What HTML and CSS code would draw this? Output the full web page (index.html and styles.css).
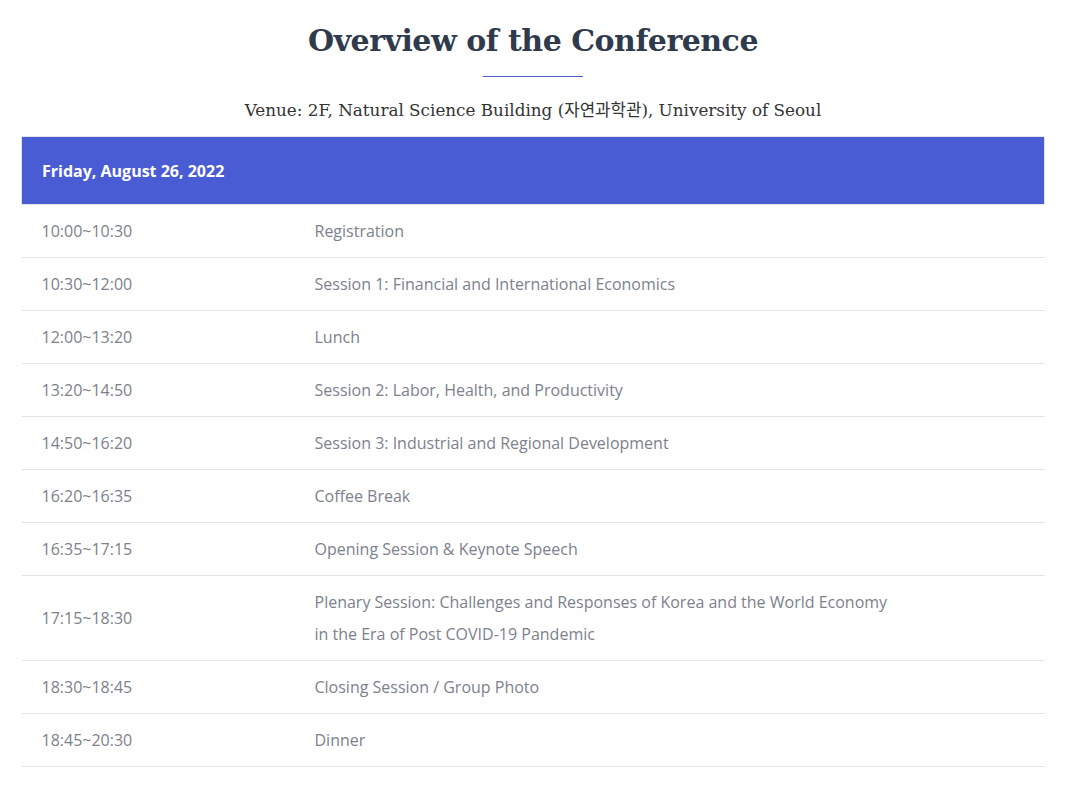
FILE: index.html
```html
<!DOCTYPE html>
<html lang="en">
<head>
<meta charset="utf-8">
<title>Overview of the Conference</title>
<link rel="stylesheet" href="styles.css">
</head>
<body>
<main class="wrap">
  <h1 class="title">Overview of the Conference</h1>
  <div class="rule"></div>
  <p class="venue">Venue: 2F, Natural Science Building (자연과학관), University of Seoul</p>
  <table class="schedule">
    <thead>
      <tr><th colspan="2">Friday, August 26, 2022</th></tr>
    </thead>
    <tbody>
      <tr><td class="time">10:00~10:30</td><td>Registration</td></tr>
      <tr><td class="time">10:30~12:00</td><td>Session 1: Financial and International Economics</td></tr>
      <tr><td class="time">12:00~13:20</td><td>Lunch</td></tr>
      <tr><td class="time">13:20~14:50</td><td>Session 2: Labor, Health, and Productivity</td></tr>
      <tr><td class="time">14:50~16:20</td><td>Session 3: Industrial and Regional Development</td></tr>
      <tr><td class="time">16:20~16:35</td><td>Coffee Break</td></tr>
      <tr><td class="time">16:35~17:15</td><td>Opening Session &amp; Keynote Speech</td></tr>
      <tr><td class="time">17:15~18:30</td><td>Plenary Session: Challenges and Responses of Korea and the World Economy<br>in the Era of Post COVID-19 Pandemic</td></tr>
      <tr><td class="time">18:30~18:45</td><td>Closing Session / Group Photo</td></tr>
      <tr><td class="time">18:45~20:30</td><td>Dinner</td></tr>
    </tbody>
  </table>
</main>
</body>
</html>
```

FILE: styles.css
```css
html, body {
  margin: 0;
  padding: 0;
  background: #ffffff;
}

.wrap {
  margin: 0 20px 0 21px;
  padding-top: 18px;
}

.title {
  margin: 0;
  text-align: center;
  font-family: "DejaVu Serif", "Liberation Serif", serif;
  font-weight: bold;
  font-size: 30px;
  line-height: 46px;
  color: #2f3a4c;
  letter-spacing: -0.5px;
}

.rule {
  width: 100px;
  height: 1px;
  background: #4a5cd4;
  margin: 12px auto 0;
}

.venue {
  margin: 20px 0 13px;
  text-align: center;
  font-family: "DejaVu Serif", "Liberation Serif", "Noto Sans CJK KR", serif;
  font-size: 16.8px;
  line-height: 26px;
  color: #333333;
}

.schedule {
  width: 100%;
  border-collapse: collapse;
  font-family: "Open Sans", "Noto Sans", sans-serif;
  font-size: 16px;
}

.schedule th {
  background: #4a5cd4;
  color: #ffffff;
  text-align: left;
  font-weight: bold;
  padding: 0 20px;
  height: 67px;
  border: 1px solid #e4e4e4;
}

.schedule td {
  padding: 10px 20px;
  line-height: 32px;
  color: #7d818c;
  border-bottom: 1px solid #e4e4e4;
  vertical-align: middle;
}

.schedule td.time {
  width: 233px;
}
```
